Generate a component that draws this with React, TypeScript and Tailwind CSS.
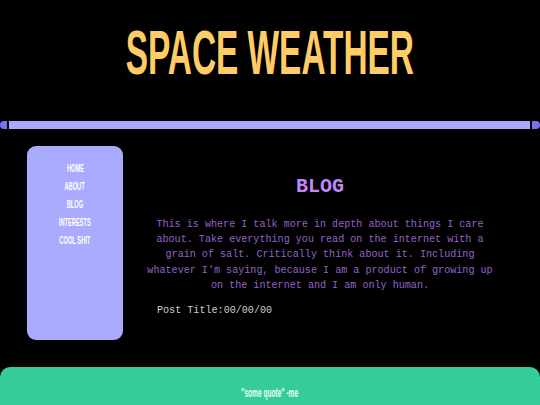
import React from 'react';

const navItems = ['HOME', 'ABOUT', 'BLOG', 'INTERESTS', 'COOL SHIT'];

const condensed = { fontFamily: '"Liberation Sans", Arial, sans-serif' };
const mono = { fontFamily: '"Courier New", Courier, "Liberation Mono", monospace' };

export default function App() {
  return (
    <div className="w-[540px] h-[405px] bg-black overflow-hidden flex flex-col">
      {/* Header */}
      <header className="h-[104px] flex items-center justify-center">
        <h1
          className="inline-block scale-x-[0.53] text-[63px] font-bold leading-none text-[#ffcc66] whitespace-nowrap"
          style={condensed}
        >
          SPACE WEATHER
        </h1>
      </header>

      {/* Divider bar */}
      <div className="mt-[17px] flex h-[8px] items-stretch gap-[2px]">
        <div className="w-[7px] rounded-l-full bg-[#7474ee]" />
        <div className="flex-1 bg-[#a9a9fc]" />
        <div className="w-[8px] rounded-r-full bg-[#7474ee]" />
      </div>

      {/* Main */}
      <main className="mt-[17px] flex pl-[27px]">
        <nav className="w-[96px] h-[194px] rounded-[9px] bg-[#aaaaff] pt-[16px] flex flex-col items-center">
          {navItems.map((item) => (
            <a
              key={item}
              href="#"
              className="block h-[18px] leading-[12px] text-[11px] font-bold text-white whitespace-nowrap scale-x-[0.52]"
              style={condensed}
            >
              {item}
            </a>
          ))}
        </nav>

        <section className="ml-[20px] w-[354px]" style={mono}>
          <h2 className="mt-[29px] text-center text-[20px] font-bold leading-[24px] text-[#c386f7]">
            BLOG
          </h2>
          <p className="mt-[18px] text-center text-[10.1px] leading-[15.2px] text-[#9563c9]">
            This is where I talk more in depth about things I care about. Take everything you
            read on the internet with a grain of salt. Critically think about it. Including
            whatever I'm saying, because I am a product of growing up on the internet and I am
            only human.
          </p>
          <p className="mt-[10px] pl-[14px] text-[10.1px] leading-[15px] text-[#cccccc]">
            Post Title:00/00/00
          </p>
        </section>
      </main>

      {/* Footer */}
      <footer className="mt-auto h-[38px] rounded-t-[10px] bg-[#34cd9a] flex items-end justify-center pb-[4px]">
        <span
          className="inline-block scale-x-[0.55] text-[12px] font-bold leading-[16px] text-[#e6fff4] whitespace-nowrap"
          style={condensed}
        >
          "some quote" -me
        </span>
      </footer>
    </div>
  );
}
